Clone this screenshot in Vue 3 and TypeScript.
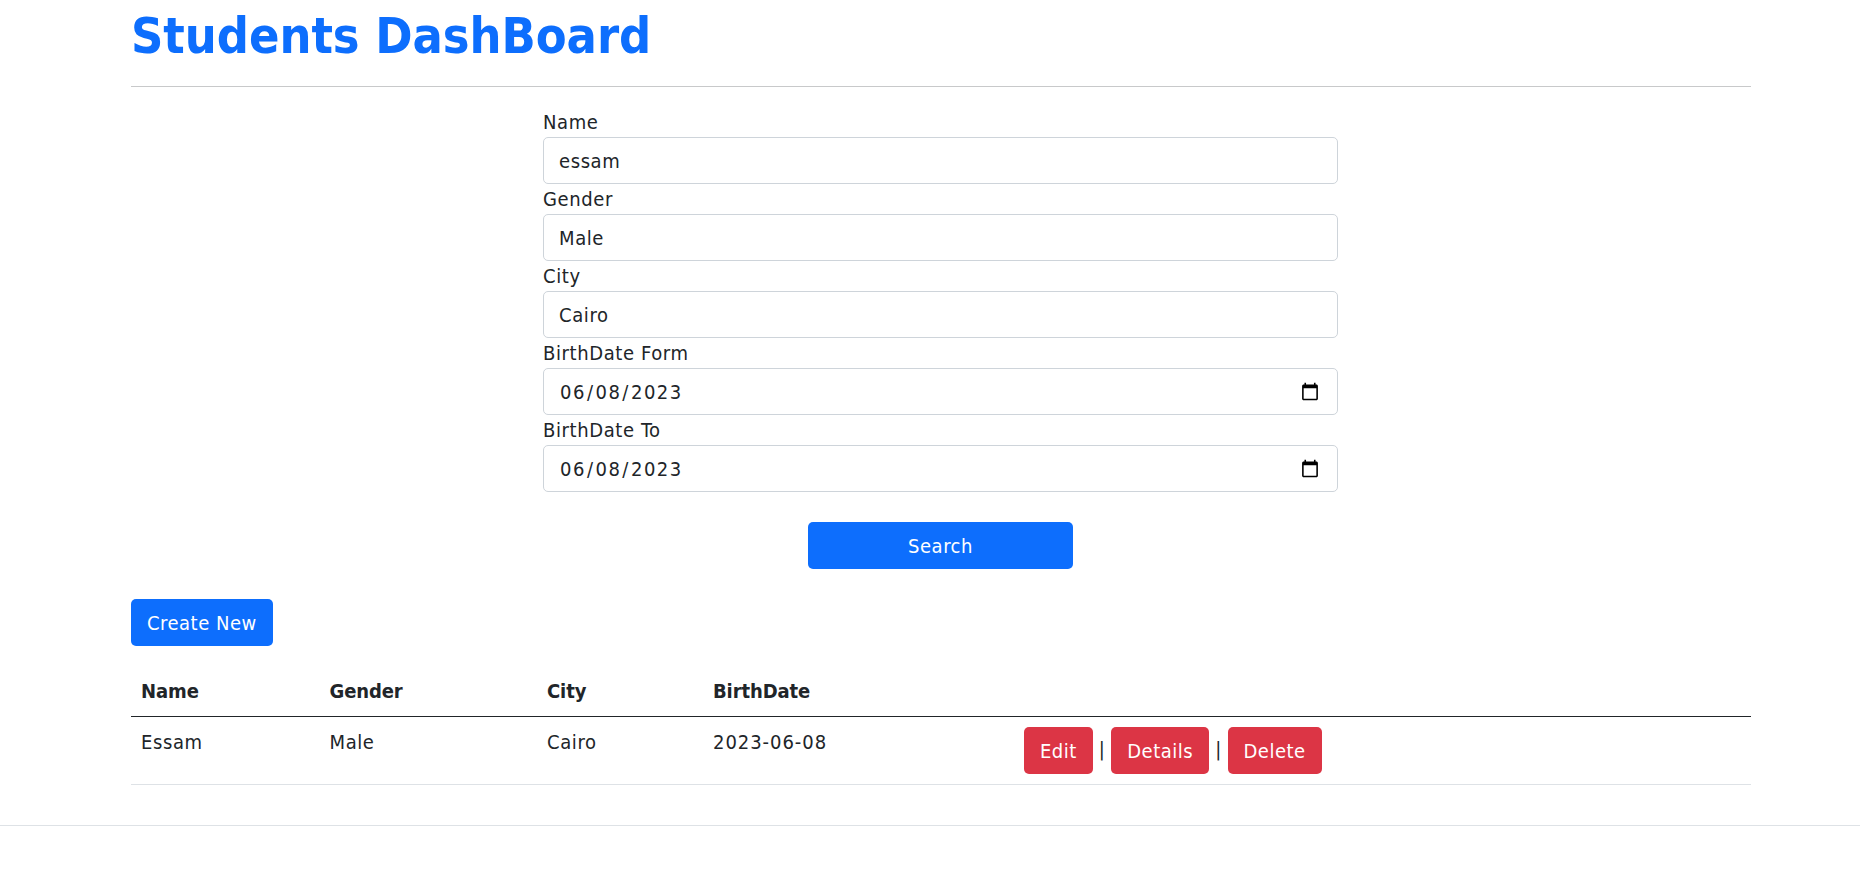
<script setup lang="ts">
interface Field { label: string; type: string; value: string }
const fields: Field[] = [
  { label: 'Name', type: 'text', value: 'essam' },
  { label: 'Gender', type: 'text', value: 'Male' },
  { label: 'City', type: 'text', value: 'Cairo' },
  { label: 'BirthDate Form', type: 'date', value: '2023-06-08' },
  { label: 'BirthDate To', type: 'date', value: '2023-06-08' },
]
</script>

<template>
  <div class="page">
    <main class="container">
      <h1 class="title">Students DashBoard</h1>
      <hr class="rule" />
      <form class="search" @submit.prevent>
        <div v-for="f in fields" :key="f.label" class="field">
          <label class="label">{{ f.label }}</label>
          <input class="control" :class="{ 'control-date': f.type === 'date' }" :type="f.type" :value="f.value" />
        </div>
        <button class="btn btn-primary search-btn" type="submit">Search</button>
      </form>
      <div class="create"><a class="btn btn-primary">Create New</a></div>
      <table class="table">
        <colgroup>
          <col class="col-name" />
          <col class="col-gender" />
          <col class="col-city" />
          <col class="col-date" />
          <col />
        </colgroup>
        <thead>
          <tr>
            <th>Name</th>
            <th>Gender</th>
            <th>City</th>
            <th>BirthDate</th>
            <th></th>
          </tr>
        </thead>
        <tbody>
          <tr>
            <td>Essam</td>
            <td>Male</td>
            <td>Cairo</td>
            <td class="date-cell">2023-06-08</td>
            <td class="actions">
              <a class="btn btn-danger">Edit</a> | <a class="btn btn-danger">Details</a> | <a class="btn btn-danger">Delete</a>
            </td>
          </tr>
        </tbody>
      </table>
    </main>
    <footer class="footer"></footer>
  </div>
</template>

<style>
html, body { margin: 0; background: #fff; }
</style>

<style scoped>
.page {
  font-family: "DejaVu Sans Condensed", "DejaVu Sans", sans-serif;
  font-size: 20px;
  line-height: 30px;
  letter-spacing: 0.6px;
  color: #212529;
}
.container {
  width: 1620px;
  margin: 0 109px 0 131px;
}
.title {
  margin: 0;
  padding-top: 6px;
  font-size: 50px;
  line-height: 60px;
  font-weight: 700;
  letter-spacing: -0.05px;
  color: #0d6efd;
}
.rule {
  margin: 20px 0;
  border: 0;
  border-top: 1px solid #c8c9ca;
}
.search {
  width: 795px;
  margin-left: 412px;
  display: flex;
  flex-direction: column;
}
.label { display: block; }
.control {
  display: block;
  box-sizing: border-box;
  width: 100%;
  height: 47px;
  padding: 7.5px 15px;
  border: 1px solid #ced4da;
  border-radius: 5px;
  font: inherit;
  letter-spacing: inherit;
  color: #212529;
  background: #fff;
}
.control-date { letter-spacing: 1.5px; }
.btn {
  display: inline-block;
  box-sizing: border-box;
  height: 47px;
  padding: 7.5px 15px;
  border: 1px solid transparent;
  border-radius: 5px;
  font: inherit;
  letter-spacing: 0.5px;
  color: #fff;
  text-align: center;
  vertical-align: middle;
}
.btn-primary { background: #0d6efd; }
.btn-danger { background: #dc3545; }
.search-btn {
  align-self: center;
  width: 265px;
  margin-top: 30px;
}
.create { margin-top: 30px; }
.table {
  width: 100%;
  margin-top: 20px;
  border-collapse: collapse;
  table-layout: fixed;
}
.col-name { width: 188.5px; }
.col-gender { width: 217.5px; }
.col-city { width: 166px; }
.col-date { width: 311px; }
.table th, .table td {
  padding: 10px;
  text-align: left;
  vertical-align: top;
}
.table th { font-weight: 700; letter-spacing: -0.1px; border-bottom: 1px solid #212529; }
.table td { border-bottom: 1px solid #dee2e6; }
.table td.date-cell { letter-spacing: 0.95px; }
.table td.actions { letter-spacing: 0.3px; }
.footer {
  margin-top: 40px;
  border-top: 1px solid #dee2e6;
}
</style>
